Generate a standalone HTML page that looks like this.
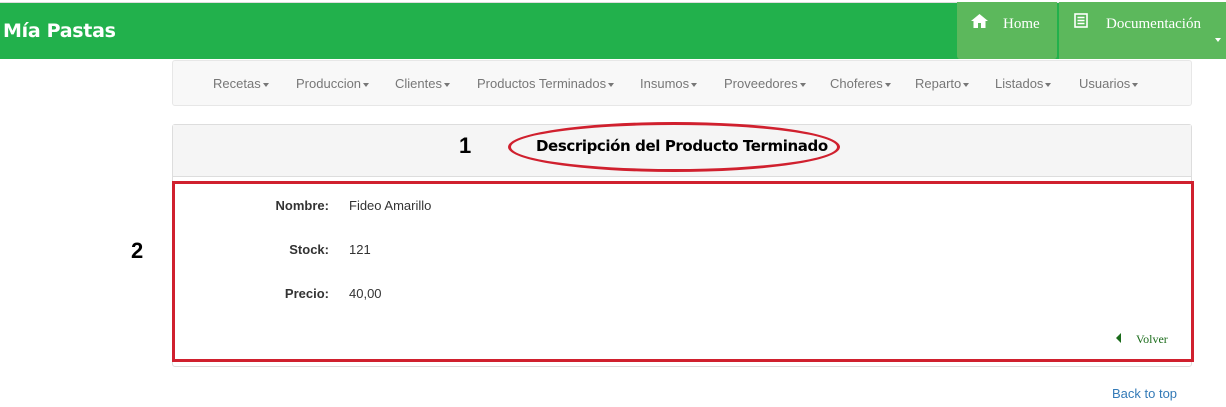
<!DOCTYPE html>
<html><head><meta charset="utf-8"><style>
*{box-sizing:border-box;margin:0;padding:0}
body{width:1226px;height:407px;background:#fff;font-family:"Liberation Sans",sans-serif;position:relative;overflow:hidden}
.top{position:absolute;left:0;top:2px;width:1226px;height:57px;background:#22b14c;border-top:1px solid #ddd}
.brand{position:absolute;left:3px;top:20px;color:#fff;font:bold 19px "DejaVu Sans",sans-serif;letter-spacing:-0.3px}
.btn{position:absolute;top:2px;height:57px;background:#5cb85c;color:#fff;font:15px "Liberation Serif",serif}
.nav{position:absolute;left:172px;top:60px;width:1020px;height:46px;background:#f8f8f8;border:1px solid #e7e7e7;border-radius:3px;font-size:13px;color:#777}
.nav span{position:absolute;top:15px}
.car{display:inline-block;border-top:4px solid #777;border-left:3px solid transparent;border-right:3px solid transparent;vertical-align:middle;margin-left:2px}
.panel{position:absolute;left:172px;top:124px;width:1020px;height:243px;border:1px solid #ddd;border-radius:3px}
.ph{position:absolute;left:0;top:0;width:1018px;height:52px;background:#f5f5f5;border-bottom:1px solid #ddd}
.lab{position:absolute;font-weight:bold;font-size:13px;color:#333;text-align:right;width:100px}
.val{position:absolute;font-size:13px;color:#333}
</style></head><body>
<div class="top"></div>
<div class="brand">Mía Pastas</div>
<div class="btn" style="left:957px;width:100px;border-radius:0 0 3px 3px">
<svg style="position:absolute;left:14px;top:12px" width="17" height="14" viewBox="0 0 17 14"><path d="M8.5 0L0 7h2.5v7h4.5V9h3v5h4.5V7H17z" fill="#fff"/></svg>
<span style="position:absolute;left:46px;top:14px">Home</span></div>
<div class="btn" style="left:1059px;width:167px">
<svg style="position:absolute;left:15px;top:11px" width="14" height="15" viewBox="0 0 14 15"><rect x="1" y="1" width="12" height="13" fill="none" stroke="#fff" stroke-width="1.6"/><path d="M3.5 4.5h7M3.5 7.5h7M3.5 10.5h7" stroke="#fff" stroke-width="1.4"/></svg>
<span style="position:absolute;left:47px;top:14px">Documentación</span>
<span class="car" style="position:absolute;left:154px;top:36px;border-top-color:#fff"></span></div>
<div class="nav">
<span style="left:40px">Recetas<i class="car"></i></span>
<span style="left:123px">Produccion<i class="car"></i></span>
<span style="left:222px">Clientes<i class="car"></i></span>
<span style="left:304px">Productos Terminados<i class="car"></i></span>
<span style="left:467px">Insumos<i class="car"></i></span>
<span style="left:551px">Proveedores<i class="car"></i></span>
<span style="left:657px">Choferes<i class="car"></i></span>
<span style="left:742px">Reparto<i class="car"></i></span>
<span style="left:822px">Listados<i class="car"></i></span>
<span style="left:906px">Usuarios<i class="car"></i></span>
</div>
<div class="panel"><div class="ph"></div></div>
<div style="position:absolute;left:459px;top:133px;font:bold 22px 'Liberation Sans',sans-serif">1</div>
<div style="position:absolute;left:508px;top:122px;width:332px;height:50px;border:3px solid #d0202e;border-radius:50%"></div>
<div style="position:absolute;left:536px;top:137px;font:bold 15px 'DejaVu Sans',sans-serif;letter-spacing:-0.4px">Descripción del Producto Terminado</div>
<div style="position:absolute;left:172px;top:181px;width:1022px;height:181px;border:3px solid #d0202e"></div>
<div style="position:absolute;left:131px;top:238px;font:bold 22px 'Liberation Sans',sans-serif">2</div>
<div class="lab" style="left:229px;top:198px">Nombre:</div><div class="val" style="left:349px;top:198px">Fideo Amarillo</div>
<div class="lab" style="left:229px;top:242px">Stock:</div><div class="val" style="left:349px;top:242px">121</div>
<div class="lab" style="left:229px;top:286px">Precio:</div><div class="val" style="left:349px;top:286px">40,00</div>
<div style="position:absolute;left:1116px;top:333px;border-right:5px solid #1a6b1a;border-top:5px solid transparent;border-bottom:5px solid transparent"></div>
<div style="position:absolute;left:1136px;top:332px;font:12px 'Liberation Serif',serif;color:#1a6b1a">Volver</div>
<div style="position:absolute;left:1112px;top:386px;font-size:13px;color:#337ab7">Back to top</div>
</body></html>
